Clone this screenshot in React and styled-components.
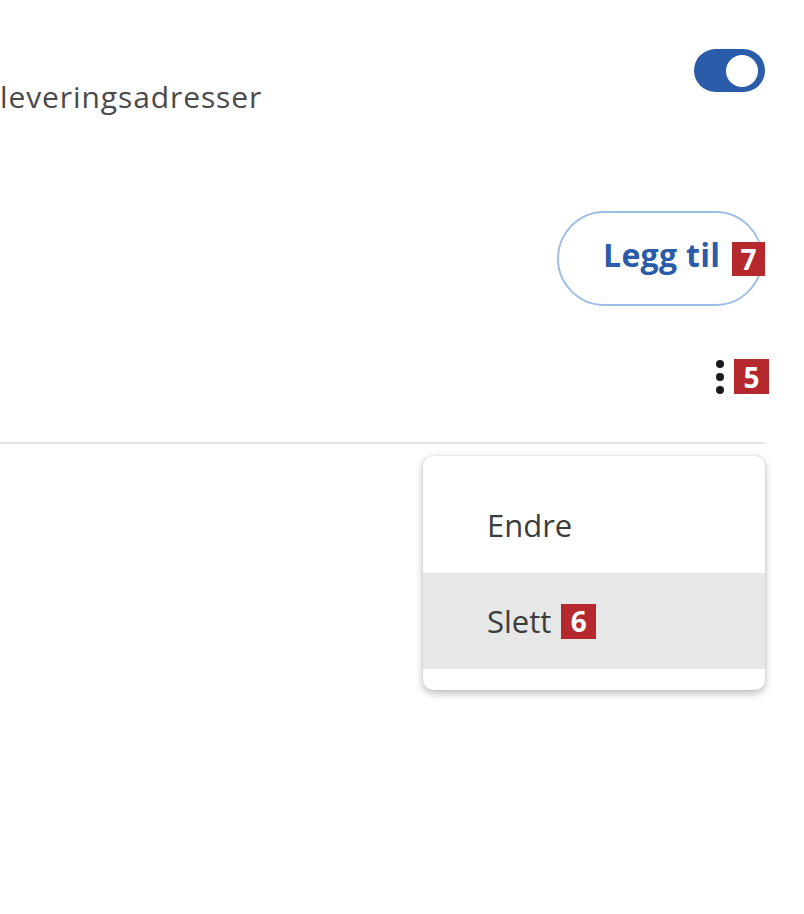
import React from "react";
import styled, { createGlobalStyle } from "styled-components";

const GlobalStyle = createGlobalStyle`
  html, body {
    margin: 0;
    padding: 0;
    background: #ffffff;
  }
  body {
    font-family: "Open Sans", "Noto Sans", "Liberation Sans", sans-serif;
  }
  * { box-sizing: border-box; }
`;

export default function App() {
  return (
    <Page>
      <GlobalStyle />
      <HeaderRow>
        <Title>leveringsadresser</Title>
        <Toggle aria-checked="true" role="switch">
          <Knob />
        </Toggle>
      </HeaderRow>

      <ActionRow>
        <AddButton>
          Legg til
          <OverBadge>7</OverBadge>
        </AddButton>
      </ActionRow>

      <KebabRow>
        <Kebab>
          <Dot />
          <Dot />
          <Dot />
        </Kebab>
        <Badge>5</Badge>
      </KebabRow>

      <Divider />

      <MenuRow>
        <Menu>
          <MenuItem>Endre</MenuItem>
          <MenuItem active>
            Slett
            <Badge>6</Badge>
          </MenuItem>
        </Menu>
      </MenuRow>
    </Page>
  );
}

const Page = styled.div`
  width: 804px;
  height: 914px;
  padding: 0 39px 0 0;
  overflow: hidden;
`;

const HeaderRow = styled.div`
  display: flex;
  justify-content: space-between;
  align-items: flex-start;
  padding-top: 49px;
`;

const Title = styled.div`
  margin-top: 29px;
  font-size: 30px;
  line-height: 38px;
  color: #4a4a4a;
  letter-spacing: 0.9px;
`;

const Toggle = styled.div`
  width: 71px;
  height: 43px;
  border-radius: 22px;
  background: #2a5caa;
  display: flex;
  align-items: center;
  justify-content: flex-end;
  padding-right: 7px;
`;

const Knob = styled.div`
  width: 32px;
  height: 32px;
  border-radius: 50%;
  background: #ffffff;
`;

const ActionRow = styled.div`
  display: flex;
  justify-content: flex-end;
  margin-top: 95px;
`;

const AddButton = styled.button`
  position: relative;
  width: 206px;
  height: 95px;
  margin-right: 2px;
  border: 2px solid #9dbde3;
  border-radius: 48px;
  background: #ffffff;
  color: #2a5caa;
  font-family: "Open Sans", "Noto Sans", sans-serif;
  font-weight: 700;
  font-size: 32px;
  letter-spacing: 0.3px;
  text-align: left;
  padding: 0 0 8px 44px;
`;

const Badge = styled.span`
  display: inline-flex;
  align-items: center;
  justify-content: center;
  width: 35px;
  height: 35px;
  background: #b5282e;
  color: #ffffff;
  font-family: "Open Sans", "Noto Sans", sans-serif;
  font-weight: 700;
  font-size: 28px;
  letter-spacing: 0;
  line-height: 1;
`;

const OverBadge = styled(Badge)`
  position: absolute;
  right: -4px;
  top: 29px;
  width: 33px;
  height: 34px;
`;

const KebabRow = styled.div`
  display: flex;
  justify-content: flex-end;
  align-items: center;
  gap: 10px;
  margin-top: 53px;
  margin-right: -4px;
`;

const Kebab = styled.div`
  display: flex;
  flex-direction: column;
  gap: 5px;
`;

const Dot = styled.span`
  width: 8px;
  height: 8px;
  border-radius: 50%;
  background: #1a1a1a;
`;

const Divider = styled.div`
  height: 2px;
  background: #e6e6e6;
  margin-top: 48px;
`;

const MenuRow = styled.div`
  display: flex;
  justify-content: flex-end;
  margin-top: 12px;
`;

const Menu = styled.div`
  width: 342px;
  padding: 21px 0 21px;
  background: #ffffff;
  border-radius: 10px;
  box-shadow: 0 3px 8px rgba(0, 0, 0, 0.28), 0 0 2px rgba(0, 0, 0, 0.12);
  overflow: hidden;
`;

const MenuItem = styled.div`
  height: 96px;
  display: flex;
  align-items: center;
  gap: 10px;
  padding-left: 64px;
  background: ${(p) => (p.active ? "#e6e7e7" : "transparent")};
  color: #3c3c3c;
  font-size: 31px;
`;
